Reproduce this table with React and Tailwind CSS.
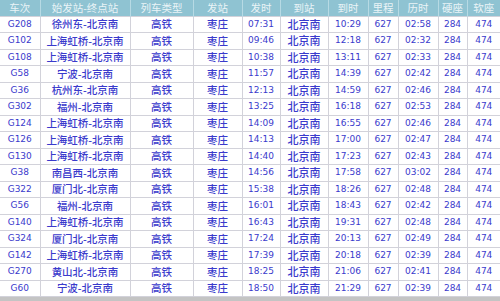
const columns = [
  { label: '车次', width: 40 },
  { label: '始发站-终点站', width: 90 },
  { label: '列车类型', width: 63 },
  { label: '发站', width: 49 },
  { label: '发时', width: 38 },
  { label: '到站', width: 48 },
  { label: '到时', width: 40 },
  { label: '里程', width: 30 },
  { label: '历时', width: 40 },
  { label: '硬座', width: 29 },
  { label: '软座', width: 33 },
];

const trains = [
  ['G208', '徐州东-北京南', '07:31', '10:29', '02:58'],
  ['G102', '上海虹桥-北京南', '09:46', '12:18', '02:32'],
  ['G108', '上海虹桥-北京南', '10:38', '13:11', '02:33'],
  ['G58', '宁波-北京南', '11:57', '14:39', '02:42'],
  ['G36', '杭州东-北京南', '12:13', '14:59', '02:46'],
  ['G302', '福州-北京南', '13:25', '16:18', '02:53'],
  ['G124', '上海虹桥-北京南', '14:09', '16:55', '02:46'],
  ['G126', '上海虹桥-北京南', '14:13', '17:00', '02:47'],
  ['G130', '上海虹桥-北京南', '14:40', '17:23', '02:43'],
  ['G38', '南昌西-北京南', '14:56', '17:58', '03:02'],
  ['G322', '厦门北-北京南', '15:38', '18:26', '02:48'],
  ['G56', '福州-北京南', '16:01', '18:43', '02:42'],
  ['G140', '上海虹桥-北京南', '16:43', '19:31', '02:48'],
  ['G324', '厦门北-北京南', '17:24', '20:13', '02:49'],
  ['G142', '上海虹桥-北京南', '17:39', '20:18', '02:39'],
  ['G270', '黄山北-北京南', '18:25', '21:06', '02:41'],
  ['G60', '宁波-北京南', '18:50', '21:29', '02:39'],
];

const cjk = "font-['Noto_Sans_CJK_SC','Noto_Sans',sans-serif] text-[10.5px] leading-none";
const num = "font-['DejaVu_Sans','Noto_Sans_CJK_SC',sans-serif] text-[9px] leading-none";
const cell = 'p-0 text-center border border-[#d2d2da]';

export default function App() {
  return (
    <div className="w-[500px] h-[301px] bg-[#c4c4c4] overflow-hidden">
      <table className="table-fixed border-collapse w-[500px] text-[#3a3acc]">
        <colgroup>
          {columns.map((c) => (
            <col key={c.label} style={{ width: c.width }} />
          ))}
        </colgroup>
        <thead>
          <tr className="h-[16px] bg-[#8fc3d2]">
            {columns.map((c) => (
              <th
                key={c.label}
                className={`${cjk} p-0 font-normal text-[#eaf4f7] text-center border-x border-[#b7dae4] first:border-l-0 last:border-r-0`}
              >
                {c.label}
              </th>
            ))}
          </tr>
        </thead>
        <tbody className="bg-white">
          {trains.map(([no, route, dep, arr, dur]) => (
            <tr key={no} className="h-[16.5px]">
              <td className={`${num} ${cell} text-[8.5px] border-l-0`}>{no}</td>
              <td className={`${cjk} ${cell} font-medium`}>{route}</td>
              <td className={`${cjk} ${cell} font-medium`}>高铁</td>
              <td className={`${cjk} ${cell} font-medium`}>枣庄</td>
              <td className={`${num} ${cell}`}>{dep}</td>
              <td className={`${cjk} ${cell} font-medium text-[11px]`}>北京南</td>
              <td className={`${num} ${cell}`}>{arr}</td>
              <td className={`${num} ${cell}`}>627</td>
              <td className={`${num} ${cell}`}>{dur}</td>
              <td className={`${num} ${cell}`}>284</td>
              <td className={`${num} ${cell} border-r-0`}>474</td>
            </tr>
          ))}
        </tbody>
      </table>
    </div>
  );
}
